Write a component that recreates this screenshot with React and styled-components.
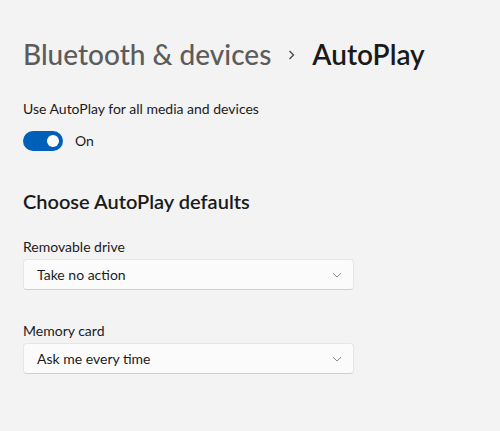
import React from "react";
import styled, { createGlobalStyle } from "styled-components";

const Global = createGlobalStyle`
  html, body { margin: 0; padding: 0; background: #f3f3f3; }
  body { font-family: Lato, "Noto Sans", sans-serif; color: #1b1b1b; }
`;

const Page = styled.div`
  width: 500px;
  height: 431px;
  background: #f3f3f3;
  box-sizing: border-box;
  padding: 34px 0 0 23px;
  display: flex;
  flex-direction: column;
`;

const Breadcrumb = styled.h1`
  margin: 0;
  display: flex;
  align-items: center;
  gap: 17px;
  font-size: 28px;
  font-weight: 500;
  line-height: 40px;
`;

const Crumb = styled.span`
  color: ${(p) => (p.$current ? "#1a1a1a" : "#5c5c5c")};
  font-weight: ${(p) => (p.$current ? 600 : 500)};
`;

const Sep = styled.svg`
  width: 7px;
  height: 10px;
  margin-top: 1px;
`;

const Label = styled.div`
  font-size: 14px;
  line-height: 20px;
  color: #1b1b1b;
  margin-top: ${(p) => p.$mt || 0}px;
`;

const ToggleRow = styled.div`
  display: flex;
  align-items: center;
  gap: 12px;
  margin-top: 12px;
`;

const Toggle = styled.div`
  width: 40px;
  height: 20px;
  border-radius: 10px;
  background: #005fb8;
  display: flex;
  align-items: center;
  justify-content: flex-end;
  padding: 0 4px;
  box-sizing: border-box;
`;

const Knob = styled.div`
  width: 12px;
  height: 12px;
  border-radius: 50%;
  background: #fff;
`;

const SectionTitle = styled.h2`
  margin: 36px 0 0;
  font-size: 20px;
  font-weight: 600;
  line-height: 28px;
  color: #1a1a1a;
`;

const Select = styled.div`
  margin-top: ${(p) => p.$mt ?? 2}px;
  width: 331px;
  height: 31px;
  box-sizing: border-box;
  background: #fbfbfb;
  border: 1px solid #e6e6e6;
  border-bottom-color: #cfcfcf;
  border-radius: 4px;
  display: flex;
  align-items: center;
  justify-content: space-between;
  padding: 0 11px 0 13px;
  font-size: 14px;
  color: #1b1b1b;
`;

const Chevron = () => (
  <svg width="10" height="10" viewBox="0 0 10 10">
    <path d="M1 3.2 L5 7 L9 3.2" fill="none" stroke="#8a8a8a" strokeWidth="1" />
  </svg>
);

export default function App() {
  return (
    <>
      <Global />
      <Page>
        <Breadcrumb>
          <Crumb>Bluetooth &amp; devices</Crumb>
          <Sep viewBox="0 0 7 10">
            <path d="M1.5 1 L5.5 5 L1.5 9" fill="none" stroke="#4a4a4a" strokeWidth="1.4" />
          </Sep>
          <Crumb $current>AutoPlay</Crumb>
        </Breadcrumb>
        <Label $mt={25}>Use AutoPlay for all media and devices</Label>
        <ToggleRow>
          <Toggle>
            <Knob />
          </Toggle>
          <Label>On</Label>
        </ToggleRow>
        <SectionTitle>Choose AutoPlay defaults</SectionTitle>
        <Label $mt={22}>Removable drive</Label>
        <Select $mt={2}>
          <span>Take no action</span>
          <Chevron />
        </Select>
        <Label $mt={31}>Memory card</Label>
        <Select>
          <span>Ask me every time</span>
          <Chevron />
        </Select>
      </Page>
    </>
  );
}
